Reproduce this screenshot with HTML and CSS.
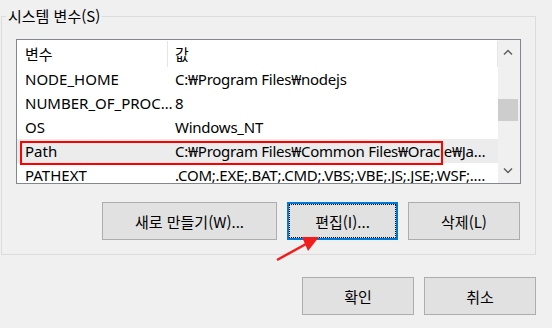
FILE: index.html
```html
<!DOCTYPE html>
<html lang="ko">
<head>
<meta charset="utf-8">
<link rel="stylesheet" href="styles.css">
</head>
<body>
<div class="group">
  <div class="legend">시스템 변수(S)</div>
  <div class="list">
    <div class="table">
      <div class="head">
        <div class="hc1">변수</div>
        <div class="hc2">값</div>
      </div>
      <div class="row"><div class="c1">NODE_HOME</div><div class="c2">C:₩Program Files₩nodejs</div></div>
      <div class="row"><div class="c1">NUMBER_OF_PROC…</div><div class="c2">8</div></div>
      <div class="row"><div class="c1">OS</div><div class="c2">Windows_NT</div></div>
      <div class="row sel"><div class="c1">Path</div><div class="c2">C:₩Program Files₩Common Files₩Oracle₩Ja…</div></div>
      <div class="row"><div class="c1">PATHEXT</div><div class="c2">.COM;.EXE;.BAT;.CMD;.VBS;.VBE;.JS;.JSE;.WSF;.…</div></div>
    </div>
    <div class="scroll">
      <div class="arrow"><svg width="10" height="6" viewBox="0 0 10 6"><path d="M1 5.5 L5 1.5 L9 5.5" fill="none" stroke="#606060" stroke-width="1.5"/></svg></div>
      <div class="track"><div class="thumb"></div></div>
      <div class="arrow"><svg width="10" height="6" viewBox="0 0 10 6"><path d="M1 0.5 L5 4.5 L9 0.5" fill="none" stroke="#606060" stroke-width="1.5"/></svg></div>
    </div>
    <div class="mark"></div>
  </div>
  <div class="actions">
    <button class="btn wide">새로 만들기(W)...</button>
    <button class="btn focus">편집(I)...</button>
    <button class="btn mid">삭제(L)</button>
  </div>
</div>
<div class="footer">
  <button class="btn bot">확인</button>
  <button class="btn bot">취소</button>
</div>
<svg class="annot" width="552" height="328" viewBox="0 0 552 328">
  <line x1="277" y1="260" x2="306" y2="244" stroke="#f21c1c" stroke-width="2.5"/>
  <polygon points="302,237 319,237 308,251" fill="#f21c1c"/>
</svg>
</body>
</html>
```
FILE: styles.css
```css
html, body {
  margin: 0;
  padding: 0;
}
body {
  width: 552px;
  height: 328px;
  background: #f0f0f0;
  position: relative;
  overflow: hidden;
  font-family: "Noto Sans", "Noto Sans CJK KR", sans-serif;
  font-size: 15px;
  color: #000;
}
.group {
  box-sizing: border-box;
  margin: 16px 0 0 1px;
  width: 535px;
  height: 239px;
  border: 1px solid #dcdcdc;
}
.legend {
  display: table;
  margin: -11px 0 0 4px;
  padding: 0 2px;
  height: 20px;
  line-height: 20px;
  background: #f0f0f0;
  font-family: "Noto Sans CJK KR", sans-serif;
}
.list {
  position: relative;
  box-sizing: border-box;
  margin: 13px 0 0 14px;
  width: 505px;
  height: 145px;
  border: 1px solid #828790;
  background: #fff;
  display: flex;
  overflow: hidden;
}
.table {
  flex: 1;
  min-width: 0;
}
.head {
  display: flex;
  height: 27px;
  align-items: stretch;
}
.hc1, .hc2 {
  margin-top: 1px;
  line-height: 25px;
  font-family: "Noto Sans CJK KR", sans-serif;
  border-right: 1px solid #e5e5e5;
}
.hc1 {
  box-sizing: border-box;
  width: 151px;
  padding-left: 8px;
}
.hc2 {
  flex: 1;
  padding-left: 7px;
}
.row {
  display: flex;
  height: 24px;
  line-height: 24px;
  white-space: nowrap;
}
.row.sel {
  background: #ececec;
}
.c1 {
  box-sizing: border-box;
  width: 158px;
  padding-left: 8px;
  overflow: hidden;
}
.c2 {
  flex: 1;
  overflow: hidden;
  letter-spacing: -0.25px;
}
.scroll {
  width: 22px;
  background: #f0f0f0;
  display: flex;
  flex-direction: column;
}
.arrow {
  height: 24px;
  display: flex;
  align-items: center;
  justify-content: center;
  padding-right: 2px;
}
.track {
  flex: 1;
  padding-top: 35px;
}
.thumb {
  width: 20px;
  height: 22px;
  background: #cdcdcd;
}
.mark {
  position: absolute;
  left: 3px;
  top: 101px;
  width: 423px;
  height: 24px;
  box-sizing: border-box;
  border: 2px solid #f00;
}
.actions {
  display: flex;
  justify-content: flex-end;
  column-gap: 10px;
  margin-top: 18px;
  padding-right: 15px;
}
.btn {
  box-sizing: border-box;
  height: 38px;
  margin: 0;
  padding: 0;
  background: #e1e1e1;
  border: 1px solid #adadad;
  font-family: "Noto Sans CJK KR", sans-serif;
  font-size: 15px;
  color: #000;
}
.wide { width: 175px; }
.focus {
  width: 111px;
  border: 2px solid #0078d7;
  outline: 1px dotted #000;
  outline-offset: -3px;
}
.mid { width: 112px; }
.footer {
  display: flex;
  justify-content: flex-end;
  column-gap: 10px;
  margin-top: 22px;
  padding-right: 16px;
}
.bot { width: 112px; }
.annot {
  position: absolute;
  left: 0;
  top: 0;
  pointer-events: none;
}
```
